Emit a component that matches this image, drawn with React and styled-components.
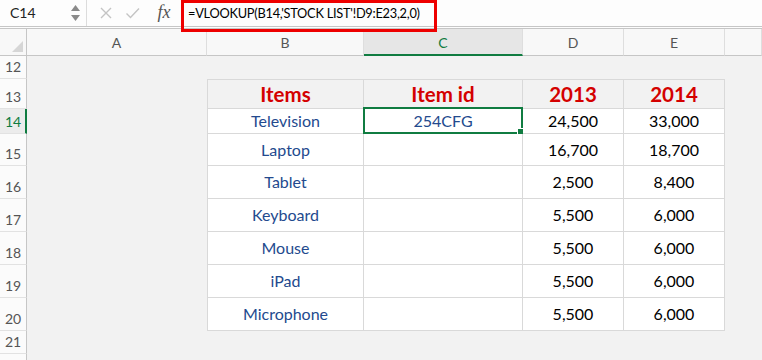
import React from 'react';
import styled, { createGlobalStyle } from 'styled-components';

const GREEN = '#107c41';
const GRID = '#d9d9d9';

const GlobalStyle = createGlobalStyle`
  html, body { margin: 0; padding: 0; background: #f2f2f2; }
  body { font-family: Lato, "Open Sans", sans-serif; overflow: hidden; }
  * { box-sizing: border-box; }
`;

const Page = styled.div`
  width: 762px;
  height: 360px;
  overflow: hidden;
  display: flex;
  flex-direction: column;
`;

const FormulaBar = styled.div`
  position: relative;
  z-index: 5;
  height: 29px;
  flex: none;
  display: flex;
  align-items: center;
  background: #fdfdfd;
  border-bottom: 3px double #c6c6c6;
`;

const NameBox = styled.div`
  width: 87px;
  height: 100%;
  display: flex;
  align-items: center;
  justify-content: space-between;
  padding: 0 6px 1px 10px;
  border-right: 1px solid #dcdcdc;
  font-size: 14px;
  color: #222;
`;

const Spinner = styled.div`
  display: flex;
  flex-direction: column;
  gap: 4px;
  margin-top: 1px;
`;

const IconSlot = styled.div`
  width: ${p => p.$w}px;
  display: flex;
  align-items: center;
  justify-content: center;
  color: ${p => p.$color || '#c4c4c4'};
`;

const Fx = styled.span`
  font-family: "Liberation Serif", "DejaVu Serif", serif;
  font-style: italic;
  font-size: 18px;
  color: #555;
  padding-bottom: 2px;
`;

const FormulaText = styled.div`
  padding-left: 2px;
  font-size: 12.8px;
  color: #000;
  letter-spacing: -0.25px;
  padding-bottom: 1px;
`;

const Highlight = styled.div`
  position: absolute;
  left: 181px;
  top: 0;
  width: 256px;
  height: 32px;
  border: 3px solid #ee0000;
  pointer-events: none;
`;

const Sheet = styled.div`
  flex: 1;
  display: grid;
  grid-template-columns: 27px 180px 157px 159px 101px 101px 1fr;
  grid-template-rows: 27px 23px 30px 25px 32px 33px 33px 33px 33px 33px 23px 23px;
  background: #f2f2f2;
`;

const ColHead = styled.div`
  display: flex;
  align-items: center;
  justify-content: center;
  font-size: 14px;
  color: ${p => (p.$active ? GREEN : '#555')};
  background: ${p => (p.$active ? '#e6e6e6' : '#f8f8f8')};
  border-right: 1px solid #dedede;
  border-bottom: ${p => (p.$active ? `2px solid ${GREEN}` : '1px solid #c6c6c6')};
  padding-top: ${p => (p.$active ? '1px' : '0')};
`;

const Corner = styled.div`
  display: flex;
  align-items: flex-end;
  justify-content: flex-end;
  padding: 0 3px 3px 0;
  background: #f8f8f8;
  border-right: 1px solid #c6c6c6;
  border-bottom: 1px solid #c6c6c6;
`;

const RowHead = styled.div`
  display: flex;
  align-items: flex-end;
  justify-content: center;
  padding-bottom: 3px;
  font-size: 14px;
  color: ${p => (p.$active ? GREEN : '#555')};
  background: ${p => (p.$active ? '#ececec' : '#fbfbfb')};
  border-bottom: 1px solid #e2e2e2;
  border-right: ${p => (p.$active ? `2px solid ${GREEN}` : '1px solid #c6c6c6')};
  padding-left: ${p => (p.$active ? '1px' : '0')};
`;

const Cell = styled.div`
  position: relative;
  display: flex;
  align-items: center;
  justify-content: center;
  font-size: ${p => (p.$head ? '20.5px' : '16px')};
  font-weight: ${p => (p.$head ? 700 : 400)};
  color: ${p => (p.$head ? '#d40000' : p.$blue ? '#234a8e' : '#000')};
  background: ${p => (p.$table ? (p.$head ? '#f2f2f2' : '#fff') : 'transparent')};
  border-right: ${p => (p.$table ? `1px solid ${GRID}` : 'none')};
  border-bottom: ${p => (p.$table ? `1px solid ${GRID}` : 'none')};
  border-top: ${p => (p.$top ? `1px solid ${GRID}` : 'none')};
  border-left: ${p => (p.$left ? `1px solid ${GRID}` : 'none')};
  padding-bottom: 1px;
`;

const Selection = styled.div`
  position: absolute;
  left: -1px;
  top: -2px;
  right: -1px;
  bottom: -1px;
  border: 2px solid ${GREEN};
  pointer-events: none;
`;

const Handle = styled.div`
  position: absolute;
  right: -4px;
  bottom: -4px;
  width: 6px;
  height: 6px;
  background: ${GREEN};
  border: 1px solid #fff;
  box-sizing: content-box;
`;

const columns = ['A', 'B', 'C', 'D', 'E', ''];

const rows = [
  { n: 12 },
  { n: 13, head: true, data: ['Items', 'Item id', '2013', '2014'] },
  { n: 14, data: ['Television', '254CFG', '24,500', '33,000'] },
  { n: 15, data: ['Laptop', '', '16,700', '18,700'] },
  { n: 16, data: ['Tablet', '', '2,500', '8,400'] },
  { n: 17, data: ['Keyboard', '', '5,500', '6,000'] },
  { n: 18, data: ['Mouse', '', '5,500', '6,000'] },
  { n: 19, data: ['iPad', '', '5,500', '6,000'] },
  { n: 20, data: ['Microphone', '', '5,500', '6,000'] },
  { n: 21 },
  { n: 22 },
];

const CrossIcon = () => (
  <svg width="14" height="14" viewBox="0 0 14 14" fill="none" stroke="currentColor" strokeWidth="1.4">
    <path d="M2 2 L12 12 M12 2 L2 12" />
  </svg>
);

const CheckIcon = () => (
  <svg width="16" height="14" viewBox="0 0 16 14" fill="none" stroke="currentColor" strokeWidth="1.4">
    <path d="M1.5 7.5 L5.5 11.5 L14 2.5" />
  </svg>
);

const Arrow = ({ up }) => (
  <svg width="9" height="6" viewBox="0 0 9 6">
    <path d={up ? 'M4.5 0 L9 6 L0 6 Z' : 'M0 0 L9 0 L4.5 6 Z'} fill="#8a8a8a" />
  </svg>
);

export default function App() {
  return (
    <Page>
      <GlobalStyle />
      <FormulaBar>
        <NameBox>
          C14
          <Spinner>
            <Arrow up />
            <Arrow />
          </Spinner>
        </NameBox>
        <IconSlot $w={37}><CrossIcon /></IconSlot>
        <IconSlot $w={18}><CheckIcon /></IconSlot>
        <IconSlot $w={44} $color="#555"><Fx>fx</Fx></IconSlot>
        <FormulaText>=VLOOKUP(B14,'STOCK LIST'!D9:E23,2,0)</FormulaText>
        <Highlight />
      </FormulaBar>

      <Sheet>
        <Corner>
          <svg width="11" height="11" viewBox="0 0 11 11">
            <path d="M11 0 L11 11 L0 11 Z" fill="#d6d6d6" />
          </svg>
        </Corner>
        {columns.map((c, i) => (
          <ColHead key={'h' + i} $active={c === 'C'}>{c}</ColHead>
        ))}

        {rows.map(r => (
          <React.Fragment key={r.n}>
            <RowHead $active={r.n === 14}>{r.n}</RowHead>
            <Cell />
            {r.data
              ? r.data.map((v, i) => (
                  <Cell
                    key={i}
                    $table
                    $head={r.head}
                    $blue={i < 2}
                    $top={r.head}
                    $left={i === 0}
                  >
                    {v}
                    {r.n === 14 && i === 1 && (
                      <Selection>
                        <Handle />
                      </Selection>
                    )}
                  </Cell>
                ))
              : [0, 1, 2, 3].map(i => <Cell key={i} />)}
            <Cell />
          </React.Fragment>
        ))}
      </Sheet>
    </Page>
  );
}
